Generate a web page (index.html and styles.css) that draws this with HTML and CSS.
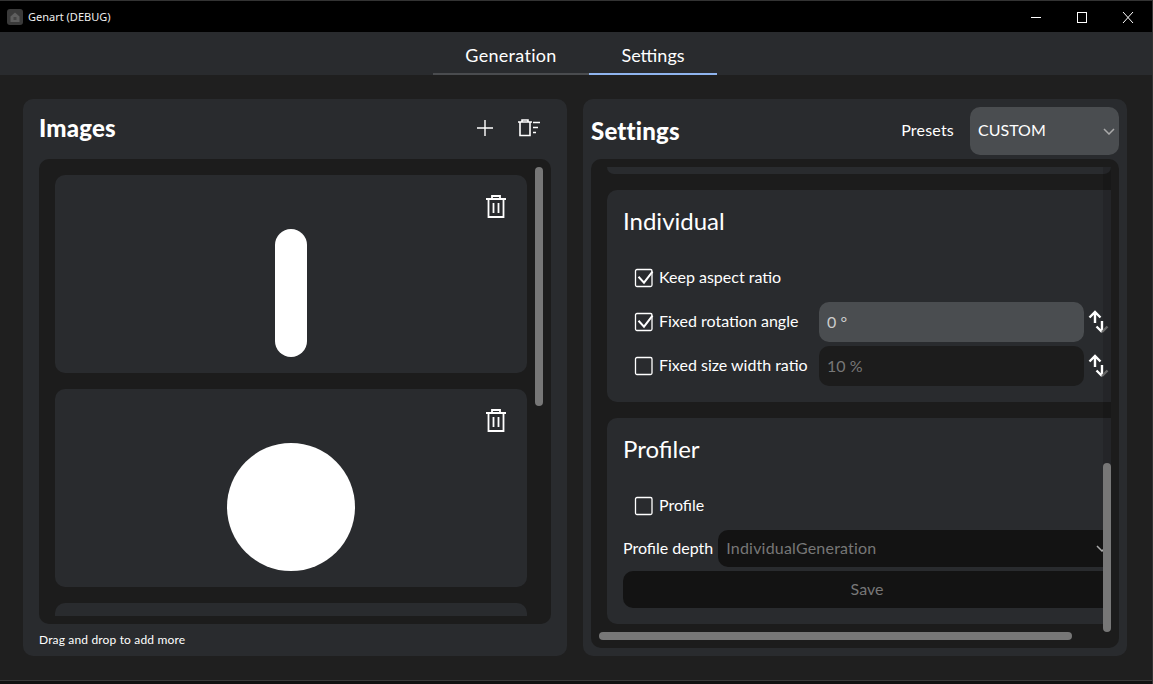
FILE: index.html
```html
<!DOCTYPE html>
<html lang="en">
<head>
<meta charset="utf-8">
<title>Genart (DEBUG)</title>
<link rel="stylesheet" href="styles.css">
</head>
<body>
<div class="window">
  <header class="titlebar">
    <div class="app">
      <svg class="app-icon" width="16" height="16" viewBox="0 0 16 16"><rect width="16" height="16" rx="3" fill="#3a3a3a"/><path d="M3.500 13V7.500L8 3.500l4.500 4V13z" fill="#5e5e5e"/><rect x="6.500" y="8" width="3" height="3" fill="#444"/></svg>
      <span class="app-title">Genart (DEBUG)</span>
    </div>
    <div class="controls">
      <svg class="ctl" width="46" height="30" viewBox="0 0 46 30"><path d="M18 15.500h10" stroke="#fff" stroke-width="1"/></svg>
      <svg class="ctl" width="46" height="30" viewBox="0 0 46 30"><rect x="18.500" y="10.500" width="9" height="10" fill="none" stroke="#fff"/></svg>
      <svg class="ctl" width="46" height="30" viewBox="0 0 46 30"><path d="M18 10l10 11M28 10L18 21" stroke="#fff" stroke-width="1"/></svg>
    </div>
  </header>
  <nav class="tabs">
    <div class="tab">Generation</div>
    <div class="tab tab-active">Settings</div>
  </nav>
  <main class="content">
    <section class="panel panel-left">
      <div class="head-left">
        <h1 class="title">Images</h1>
        <div class="head-icons">
          <svg width="18" height="18" viewBox="0 0 18 18"><path d="M9 1v16M1 9h16" stroke="#fff" stroke-width="1.400"/></svg>
          <svg width="24" height="18" viewBox="0 0 24 18"><path d="M1 3h14M5 3V1h6v2M3 3v13.500h10V3" fill="none" stroke="#fff" stroke-width="1.600"/><path d="M16 3.500h7M16 8.500h5M16 13.500h3" stroke="#fff" stroke-width="1.600"/></svg>
        </div>
      </div>
      <div class="list">
        <div class="card">
          <svg class="trash" width="20" height="23" viewBox="0 0 20 23"><path d="M0 4h20M6 4V1h8v3M2.500 4v18h15V4M7.500 8v10M12.500 8v10" fill="none" stroke="#fff" stroke-width="1.800"/></svg>
          <div class="pill"></div>
        </div>
        <div class="card">
          <svg class="trash" width="20" height="23" viewBox="0 0 20 23"><path d="M0 4h20M6 4V1h8v3M2.500 4v18h15V4M7.500 8v10M12.500 8v10" fill="none" stroke="#fff" stroke-width="1.800"/></svg>
          <div class="circle"></div>
        </div>
        <div class="card-stub"></div>
        <div class="vbar-left"></div>
      </div>
      <div class="hint">Drag and drop to add more</div>
    </section>
    <section class="panel panel-right">
      <div class="head-right">
        <h1 class="title">Settings</h1>
        <div class="presets">
          <span class="label label-presets">Presets</span>
          <div class="preset-select">CUSTOM
            <svg class="chev" width="12" height="7" viewBox="0 0 12 7"><path d="M1 1l5 5 5-5" fill="none" stroke="#aaa" stroke-width="1.500"/></svg>
          </div>
        </div>
      </div>
      <div class="settings">
        <div class="scroll">
          <div class="sec-stub"></div>
          <div class="sec sec-ind">
            <h2 class="sec-title">Individual</h2>
            <div class="row row-first">
              <svg class="cb" width="20" height="20" viewBox="0 0 20 20"><rect x="1.500" y="1.500" width="16.500" height="17" rx="1.500" fill="none" stroke="#fff" stroke-width="1.300"/><path d="M4.500 8.700l5.500 6L18.500 3.700" fill="none" stroke="#fff" stroke-width="2"/></svg>
              <span class="label label-nudge">Keep aspect ratio</span>
            </div>
            <div class="row row-input">
              <svg class="cb" width="20" height="20" viewBox="0 0 20 20"><rect x="1.500" y="1.500" width="16.500" height="17" rx="1.500" fill="none" stroke="#fff" stroke-width="1.300"/><path d="M4.500 8.700l5.500 6L18.500 3.700" fill="none" stroke="#fff" stroke-width="2"/></svg>
              <span class="label label-w label-nudge">Fixed rotation angle</span>
              <div class="input input-on">0 °</div>
              <svg class="spin" width="21" height="24" viewBox="0 0 21 24"><path d="M7 13V2M1.500 7.500L7 2l5.500 5.500" fill="none" stroke="#fff" stroke-width="2.400"/><path d="M14 11v11M8.500 16.500L14 22" fill="none" stroke="#fff" stroke-width="2.400"/><path d="M14 22l5.500-5.500" fill="none" stroke="#777" stroke-width="2.400"/></svg>
            </div>
            <div class="row row-input row-tight">
              <svg class="cb" width="20" height="20" viewBox="0 0 20 20"><rect x="1.500" y="1.500" width="16.500" height="17" rx="1.500" fill="none" stroke="#fff" stroke-width="1.300"/></svg>
              <span class="label label-w label-nudge">Fixed size width ratio</span>
              <div class="input input-off">10 %</div>
              <svg class="spin" width="21" height="24" viewBox="0 0 21 24"><path d="M7 13V2M1.500 7.500L7 2l5.500 5.500" fill="none" stroke="#fff" stroke-width="2.400"/><path d="M14 11v11M8.500 16.500L14 22" fill="none" stroke="#fff" stroke-width="2.400"/><path d="M14 22l5.500-5.500" fill="none" stroke="#777" stroke-width="2.400"/></svg>
            </div>
          </div>
          <div class="sec sec-prof">
            <h2 class="sec-title">Profiler</h2>
            <div class="row row-first">
              <svg class="cb" width="20" height="20" viewBox="0 0 20 20"><rect x="1.500" y="1.500" width="16.500" height="17" rx="1.500" fill="none" stroke="#fff" stroke-width="1.300"/></svg>
              <span class="label label-nudge">Profile</span>
            </div>
            <div class="depth">
              <span class="label label-nudge">Profile depth</span>
              <div class="depth-select">IndividualGeneration
                <svg class="chev chev-depth" width="12" height="7" viewBox="0 0 12 7"><path d="M1 1l5 5 5-5" fill="none" stroke="#aaa" stroke-width="1.500"/></svg>
              </div>
            </div>
            <div class="save">Save</div>
          </div>
          <div class="vtrack"><div class="vthumb"></div></div>
        </div>
        <div class="htrack"><div class="hthumb"></div></div>
      </div>
    </section>
  </main>
  <footer class="bottom"></footer>
</div>
</body>
</html>
```
FILE: styles.css
```css
* { box-sizing: border-box; }
html, body { margin: 0; height: 100%; background: #000; }
body { font-family: "Lato", "Noto Sans", sans-serif; color: #fff; overflow: hidden; }
h1, h2 { margin: 0; }
svg { display: block; flex: none; }
.window { width: 1153px; height: 684px; display: flex; flex-direction: column; border-top: 1px solid #333; border-right: 1px solid #333; }
.titlebar { height: 31px; background: #000; display: flex; justify-content: space-between; align-items: center; flex: none; }
.app { display: flex; align-items: center; gap: 5px; padding-left: 7px; }
.app-title { font-family: "Noto Sans", sans-serif; font-size: 11px; color: #eee; }
.controls { display: flex; padding-right: 1px; }
.tabs { height: 43px; background: #292b2e; display: flex; justify-content: center; padding-right: 2px; flex: none; }
.tab { width: 156px; height: 43px; border-bottom: 2px solid #4a4c4f; font-size: 18px; letter-spacing: .3px; line-height: 47px; text-align: center; }
.tab-active { width: 128px; border-bottom-color: #8fb4ee; letter-spacing: 0; }
.content { height: 605px; background: #1f1f1f; display: flex; gap: 16px; padding: 24px 0 0 23px; flex: none; }
.panel { width: 544px; height: 557px; background: #292b2e; border-radius: 10px; display: flex; flex-direction: column; }
.head-left { height: 60px; padding: 0 26px 2px 16px; display: flex; justify-content: space-between; align-items: center; flex: none; }
.title { font-size: 24px; font-weight: 900; letter-spacing: .2px; line-height: 30px; }
.head-icons { display: flex; gap: 23px; align-items: center; }
.list { margin: 0 16px; height: 465px; background: #1c1c1c; border-radius: 10px; padding: 16px 24px 0 16px; position: relative; overflow: hidden; flex: none; }
.card { height: 198px; background: #292b2e; border-radius: 10px; position: relative; display: flex; justify-content: center; align-items: center; padding-top: 38px; margin-bottom: 16px; }
.card-stub { height: 13px; background: #292b2e; border-radius: 10px 10px 0 0; }
.trash { position: absolute; top: 20px; right: 21px; }
.pill { width: 32px; height: 128px; border-radius: 16px; background: #fff; }
.circle { width: 128px; height: 128px; border-radius: 50%; background: #fff; }
.vbar-left { position: absolute; top: 8px; right: 8px; width: 8px; height: 239px; border-radius: 4px; background: #777; }
.hint { font-size: 12px; letter-spacing: .16px; line-height: 32px; padding-left: 16px; }
.head-right { height: 60px; padding: 8px 8px 4px; display: flex; justify-content: space-between; align-items: center; flex: none; }
.presets { display: flex; align-items: center; gap: 16px; }
.label { font-size: 16px; line-height: 20px; white-space: nowrap; }
.label-presets { letter-spacing: .2px; margin-top: -2px; }
.label-nudge { margin-top: -2px; }
.preset-select { width: 149px; height: 48px; border-radius: 10px; background: #4a4d50; font-size: 16px; line-height: 46px; padding-left: 8px; position: relative; }
.chev { position: absolute; right: 4px; top: 21px; }
.settings { margin: 0 8px; height: 489px; background: #1c1c1c; border-radius: 10px; padding: 8px; display: flex; flex-direction: column; flex: none; }
.scroll { height: 465px; overflow: hidden; position: relative; padding-left: 8px; flex: none; }
.sec-stub { height: 7px; background: #292b2e; border-radius: 0 0 10px 10px; margin-bottom: 16px; }
.sec { background: #292b2e; border-radius: 10px 0 0 10px; padding: 15px 0 0 16px; margin-bottom: 16px; }
.sec-ind { height: 212px; }
.sec-prof { height: 206px; }
.sec-title { font-size: 24px; font-weight: 400; line-height: 32px; }
.row { display: flex; align-items: center; padding-left: 11px; gap: 5px; }
.row-first { margin-top: 29px; height: 24px; }
.row-input { margin-top: 12px; height: 40px; }
.row-tight { margin-top: 4px; }
.label-w { width: 155px; }
.input { width: 265px; height: 40px; border-radius: 10px; font-size: 16px; line-height: 40px; padding-left: 8px; }
.input-on { background: #4a4d50; color: #ccc; }
.input-off { background: #1c1c1c; color: #777; }
.spin { margin-left: -1px; }
.depth { margin-top: 12px; display: flex; align-items: center; gap: 5px; height: 37px; }
.depth-select { flex: 1; height: 37px; background: #131313; border-radius: 10px 0 0 10px; color: #777; font-size: 16px; letter-spacing: .2px; line-height: 35px; padding-left: 8px; position: relative; }
.chev-depth { right: 3px; top: 15px; }
.save { margin-top: 4px; height: 37px; background: #131313; border-radius: 10px 0 0 10px; color: #777; font-size: 16px; line-height: 35px; text-align: center; }
.vtrack { position: absolute; top: 0; right: 0; width: 8px; height: 465px; background: rgba(0,0,0,.12); }
.vthumb { position: absolute; top: 296px; left: 0; width: 8px; height: 169px; border-radius: 4px; background: #777; }
.htrack { height: 8px; position: relative; border-radius: 4px; flex: none; }
.hthumb { width: 473px; height: 8px; border-radius: 4px; background: #777; }
.bottom { flex: 1; background: #111; border-top: 1px solid #3a3a3a; }
```
